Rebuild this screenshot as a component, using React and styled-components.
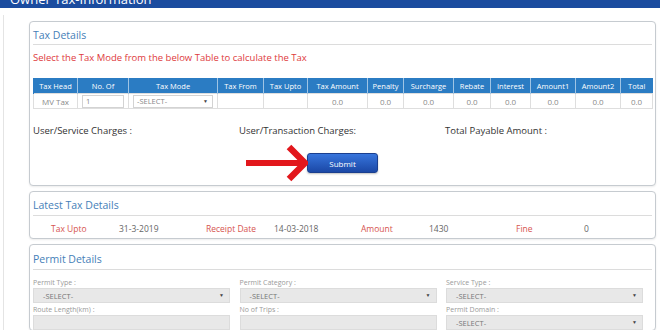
import React from 'react';
import styled, { createGlobalStyle } from 'styled-components';

const GlobalStyle = createGlobalStyle`
  html, body {
    margin: 0;
    padding: 0;
    background: #fff;
    font-family: "Open Sans", "Liberation Sans", sans-serif;
    height: 330px;
    overflow: hidden;
  }
`;

const TopBar = styled.div`
  height: 8px;
  background: #1b4c9f;
  overflow: hidden;
  padding-left: 10px;
`;

const TopTitle = styled.div`
  margin-top: -9px;
  color: #fff;
  font-size: 13px;
  line-height: 16px;
`;

const Wrapper = styled.div`
  margin: 7px 0 0 3px;
  border-left: 1px solid #e4e4e4;
  padding: 6px 4px 0 25px;
  height: 315px;
  overflow: hidden;
`;

const Panel = styled.div`
  border: 1px solid #c6cbd0;
  border-radius: 4px;
  box-shadow: 0 1px 2px rgba(0, 0, 0, 0.08);
  padding: 0 3px ${p => p.$bottom || 0}px;
  margin-bottom: 5px;
  background: #fff;
`;

const PanelTitle = styled.div`
  color: #4580b8;
  font-size: 10.5px;
  line-height: 14px;
  padding: ${p => p.$top || 6}px 0 ${p => p.$bottom || 2}px;
  border-bottom: 1px solid #dcdcdc;
`;

const Notice = styled.div`
  margin-top: 6px;
  color: #de3a3c;
  font-size: 9.5px;
  line-height: 14px;
`;

const TaxTable = styled.table`
  margin-top: 13px;
  width: 619px;
  border-collapse: collapse;
  table-layout: fixed;
`;

const Th = styled.th`
  background: #2b7cc3;
  color: #fff;
  font-weight: normal;
  font-size: 7.5px;
  height: 15px;
  padding: 0;
  border-left: 1px solid rgba(255, 255, 255, 0.55);
  &:first-child {
    border-left: 1px solid #2b7cc3;
  }
`;

const Td = styled.td`
  border: 1px solid #dedede;
  color: #8a8a8a;
  font-size: 8px;
  height: 14px;
  padding: 0 ${p => p.$pad || 0}px;
  text-align: center;
`;

const InputBox = styled.div`
  height: 11px;
  border: 1px solid #d3d3d3;
  color: #888;
  font-size: 7.5px;
  line-height: 11px;
  text-align: left;
  padding: 0 4px 0 3px;
  display: flex;
  justify-content: space-between;
  align-items: center;
`;

const Caret = styled.span`
  color: #444;
  font-size: 5px;
  line-height: 1;
`;

const ChargesRow = styled.div`
  margin-top: 15px;
  display: grid;
  grid-template-columns: 206px 206px 1fr;
  color: #333;
  font-size: 9.5px;
  line-height: 14px;
`;

const SubmitRow = styled.div`
  position: relative;
  margin-top: 15px;
  display: flex;
  justify-content: center;
`;

const SubmitButton = styled.button`
  width: 71px;
  height: 20px;
  border: 1px solid #1a3f8f;
  border-radius: 3px;
  background: linear-gradient(#3775dc, #1b48a6);
  color: #fff;
  font-family: "Open Sans", "Liberation Sans", sans-serif;
  font-size: 8px;
  padding: 0;
  box-shadow: 0 1px 2px rgba(0, 0, 0, 0.25);
`;

const Arrow = styled.svg`
  position: absolute;
  right: calc(50% + 35px);
  top: -10px;
`;

const LatestRow = styled.div`
  margin-top: 6px;
  display: grid;
  grid-template-columns: repeat(4, 155px);
  font-size: 8.5px;
  line-height: 14px;
`;

const Pair = styled.div`
  display: grid;
  grid-template-columns: 68px 1fr;
  padding-left: 18px;
`;

const Label = styled.span`
  color: #d6544f;
`;

const Value = styled.span`
  color: #666;
`;

const FormGrid = styled.div`
  margin-top: 8px;
  display: grid;
  grid-template-columns: 197px 197px 197px;
  column-gap: 9.5px;
  row-gap: 2px;
`;

const Field = styled.div`
  display: flex;
  flex-direction: column;
`;

const FieldLabel = styled.div`
  color: #9a9a9a;
  font-size: 7px;
  line-height: 10px;
`;

const FieldBox = styled.div`
  height: 15px;
  background: #e8e8e8;
  border: 1px solid #dcdcdc;
  box-sizing: border-box;
  display: flex;
  align-items: center;
  justify-content: space-between;
  padding: 0 5px 0 9px;
  color: #777;
  font-size: 7.5px;
`;

const columns = [
  ['Tax Head', 44], ['No. Of', 51], ['Tax Mode', 89], ['Tax From', 46], ['Tax Upto', 44],
  ['Tax Amount', 60], ['Penalty', 36], ['Surcharge', 50], ['Rebate', 37], ['Interest', 40],
  ['Amount1', 45], ['Amount2', 45], ['Total', 32],
];

const latest = [
  ['Tax Upto', '31-3-2019'],
  ['Receipt Date', '14-03-2018'],
  ['Amount', '1430'],
  ['Fine', '0'],
];

const fields = [
  ['Permit Type :', true],
  ['Permit Category :', true],
  ['Service Type :', true],
  ['Route Length(km) :', false],
  ['No of Trips :', false],
  ['Permit Domain :', true],
];

const App = () => {
  return (
    <>
      <GlobalStyle />
      <TopBar>
        <TopTitle>Owner Tax-Information</TopTitle>
      </TopBar>
      <Wrapper>
        <Panel $bottom={12}>
          <PanelTitle>Tax Details</PanelTitle>
          <Notice>Select the Tax Mode from the below Table to calculate the Tax</Notice>
          <TaxTable>
            <colgroup>
              {columns.map(([name, w]) => (
                <col key={name} style={{ width: w }} />
              ))}
            </colgroup>
            <thead>
              <tr>
                {columns.map(([name]) => (
                  <Th key={name}>{name}</Th>
                ))}
              </tr>
            </thead>
            <tbody>
              <tr>
                <Td>MV Tax</Td>
                <Td $pad={4}>
                  <InputBox>1</InputBox>
                </Td>
                <Td $pad={4}>
                  <InputBox>
                    -SELECT-<Caret>▼</Caret>
                  </InputBox>
                </Td>
                <Td />
                <Td />
                {columns.slice(5).map(([name]) => (
                  <Td key={name}>0.0</Td>
                ))}
              </tr>
            </tbody>
          </TaxTable>
          <ChargesRow>
            <span>User/Service Charges :</span>
            <span>User/Transaction Charges:</span>
            <span>Total Payable Amount :</span>
          </ChargesRow>
          <SubmitRow>
            <Arrow width="64" height="40" viewBox="0 0 64 40">
              <line x1="2" y1="20" x2="58" y2="20" stroke="#e2171c" strokeWidth="6" />
              <polyline
                points="45,4 61,20 45,36"
                fill="none"
                stroke="#e2171c"
                strokeWidth="6.5"
                strokeLinejoin="miter"
              />
            </Arrow>
            <SubmitButton>Submit</SubmitButton>
          </SubmitRow>
        </Panel>

        <Panel $bottom={2}>
          <PanelTitle $bottom={3}>Latest Tax Details</PanelTitle>
          <LatestRow>
            {latest.map(([label, value]) => (
              <Pair key={label}>
                <Label>{label}</Label>
                <Value>{value}</Value>
              </Pair>
            ))}
          </LatestRow>
        </Panel>

        <Panel>
          <PanelTitle $top={7} $bottom={3}>Permit Details</PanelTitle>
          <FormGrid>
            {fields.map(([label, select]) => (
              <Field key={label}>
                <FieldLabel>{label}</FieldLabel>
                <FieldBox>
                  {select && (
                    <>
                      -SELECT-<Caret>▼</Caret>
                    </>
                  )}
                </FieldBox>
              </Field>
            ))}
          </FormGrid>
        </Panel>
      </Wrapper>
    </>
  );
};

export default App;
